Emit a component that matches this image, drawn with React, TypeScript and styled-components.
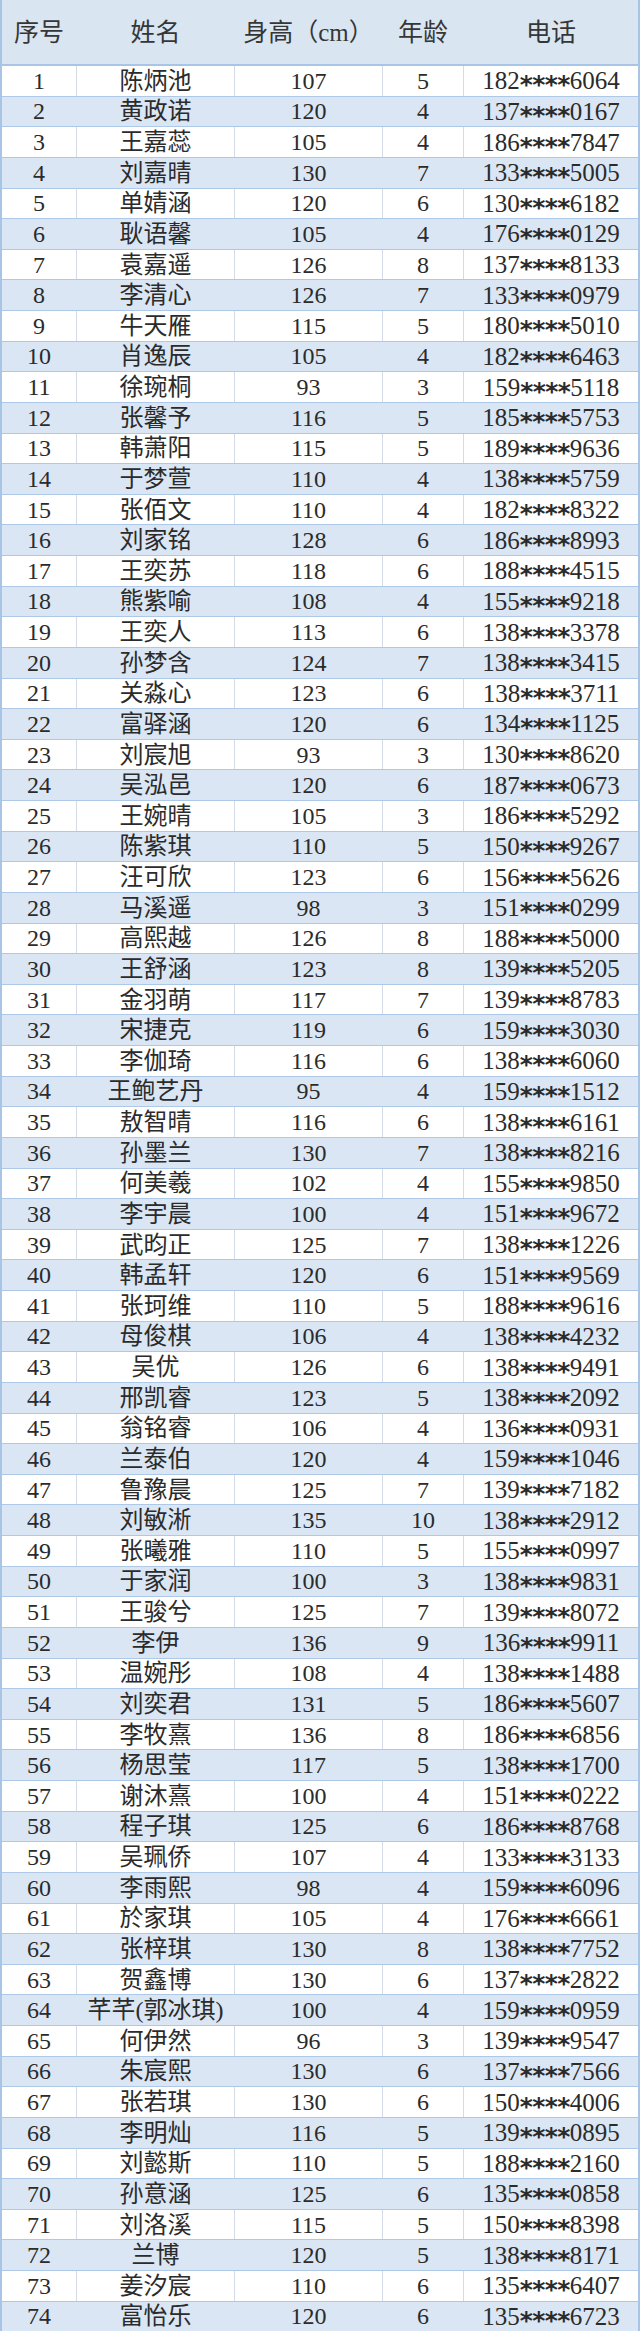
import React from 'react'
import styled, { createGlobalStyle, css } from 'styled-components'

type Student = [string, number, number, string]

const students: Student[] = [
  ['陈炳池', 107, 5, '182****6064'],
  ['黄政诺', 120, 4, '137****0167'],
  ['王嘉蕊', 105, 4, '186****7847'],
  ['刘嘉晴', 130, 7, '133****5005'],
  ['单婧涵', 120, 6, '130****6182'],
  ['耿语馨', 105, 4, '176****0129'],
  ['袁嘉遥', 126, 8, '137****8133'],
  ['李清心', 126, 7, '133****0979'],
  ['牛天雁', 115, 5, '180****5010'],
  ['肖逸辰', 105, 4, '182****6463'],
  ['徐琬桐', 93, 3, '159****5118'],
  ['张馨予', 116, 5, '185****5753'],
  ['韩萧阳', 115, 5, '189****9636'],
  ['于梦萱', 110, 4, '138****5759'],
  ['张佰文', 110, 4, '182****8322'],
  ['刘家铭', 128, 6, '186****8993'],
  ['王奕苏', 118, 6, '188****4515'],
  ['熊紫喻', 108, 4, '155****9218'],
  ['王奕人', 113, 6, '138****3378'],
  ['孙梦含', 124, 7, '138****3415'],
  ['关淼心', 123, 6, '138****3711'],
  ['富驿涵', 120, 6, '134****1125'],
  ['刘宸旭', 93, 3, '130****8620'],
  ['吴泓邑', 120, 6, '187****0673'],
  ['王婉晴', 105, 3, '186****5292'],
  ['陈紫琪', 110, 5, '150****9267'],
  ['汪可欣', 123, 6, '156****5626'],
  ['马溪遥', 98, 3, '151****0299'],
  ['高熙越', 126, 8, '188****5000'],
  ['王舒涵', 123, 8, '139****5205'],
  ['金羽萌', 117, 7, '139****8783'],
  ['宋捷克', 119, 6, '159****3030'],
  ['李伽琦', 116, 6, '138****6060'],
  ['王鲍艺丹', 95, 4, '159****1512'],
  ['敖智晴', 116, 6, '138****6161'],
  ['孙墨兰', 130, 7, '138****8216'],
  ['何美羲', 102, 4, '155****9850'],
  ['李宇晨', 100, 4, '151****9672'],
  ['武昀正', 125, 7, '138****1226'],
  ['韩孟轩', 120, 6, '151****9569'],
  ['张珂维', 110, 5, '188****9616'],
  ['母俊棋', 106, 4, '138****4232'],
  ['吴优', 126, 6, '138****9491'],
  ['邢凯睿', 123, 5, '138****2092'],
  ['翁铭睿', 106, 4, '136****0931'],
  ['兰泰伯', 120, 4, '159****1046'],
  ['鲁豫晨', 125, 7, '139****7182'],
  ['刘敏淅', 135, 10, '138****2912'],
  ['张曦雅', 110, 5, '155****0997'],
  ['于家润', 100, 3, '138****9831'],
  ['王骏兮', 125, 7, '139****8072'],
  ['李伊', 136, 9, '136****9911'],
  ['温婉彤', 108, 4, '138****1488'],
  ['刘奕君', 131, 5, '186****5607'],
  ['李牧熹', 136, 8, '186****6856'],
  ['杨思莹', 117, 5, '138****1700'],
  ['谢沐熹', 100, 4, '151****0222'],
  ['程子琪', 125, 6, '186****8768'],
  ['吴珮侨', 107, 4, '133****3133'],
  ['李雨熙', 98, 4, '159****6096'],
  ['於家琪', 105, 4, '176****6661'],
  ['张梓琪', 130, 8, '138****7752'],
  ['贺鑫博', 130, 6, '137****2822'],
  ['芊芊(郭冰琪)', 100, 4, '159****0959'],
  ['何伊然', 96, 3, '139****9547'],
  ['朱宸熙', 130, 6, '137****7566'],
  ['张若琪', 130, 6, '150****4006'],
  ['李明灿', 116, 5, '139****0895'],
  ['刘懿斯', 110, 5, '188****2160'],
  ['孙意涵', 125, 6, '135****0858'],
  ['刘洛溪', 115, 5, '150****8398'],
  ['兰博', 120, 5, '138****8171'],
  ['姜汐宸', 110, 6, '135****6407'],
  ['富怡乐', 120, 6, '135****6723'],
]

const GlobalStyle = createGlobalStyle`
  body {
    margin: 0;
    background: #ffffff;
    font-family: "Liberation Serif", "Noto Sans CJK SC", serif;
    color: #2b2b2b;
  }
`

const columns = css`
  display: grid;
  grid-template-columns: 75px 158px 148px 81px 1fr;
`

const Table = styled.div`
  display: flex;
  flex-direction: column;
  width: 640px;
  height: 2331px;
  border-left: 2px solid #a9c5e6;
  border-right: 2px solid #a9c5e6;
  box-sizing: border-box;
`

const HeaderRow = styled.div`
  ${columns}
  flex: 0 0 66px;
  background: #dae5f2;
  border-bottom: 2px solid #a9c5e6;
  box-sizing: border-box;
`

const Row = styled.div<{ $striped: boolean }>`
  ${columns}
  flex: 1 1 0;
  min-height: 0;
  background: ${({ $striped }) => ($striped ? '#dae6f4' : '#ffffff')};
  border-bottom: 1px solid #aec8e8;
  box-sizing: border-box;

  &:last-child {
    border-bottom: none;
  }
`

const Cell = styled.div<{ $divided?: boolean }>`
  display: flex;
  align-items: center;
  justify-content: center;
  font-size: 24px;
  line-height: 1;
  white-space: nowrap;
  color: #2b2b2b;
  border-right: 1px solid ${({ $divided }) => ($divided ? '#d3dbe6' : 'transparent')};

  &:last-child {
    border-right: none;
  }
`

const PhoneCell = styled(Cell)`
  font-size: 25px;
`

const Mask = styled.span`
  display: inline-block;
  font-family: "DejaVu Sans", sans-serif;
  font-weight: bold;
  font-size: 25px;
  width: 12.5px;
  text-align: center;
  transform: translateY(4px);
`

const HeaderCell = styled(Cell)`
  font-size: 25px;
  color: #363636;
`

const Phone = ({ value }: { value: string }) => {
  const [head, tail] = value.split('****')
  return (
    <>
      {head}
      {[0, 1, 2, 3].map((k) => (
        <Mask key={k}>*</Mask>
      ))}
      {tail}
    </>
  )
}

export default function App() {
  return (
    <>
      <GlobalStyle />
      <Table>
        <HeaderRow>
          <HeaderCell>序号</HeaderCell>
          <HeaderCell>姓名</HeaderCell>
          <HeaderCell>身高（cm）</HeaderCell>
          <HeaderCell>年龄</HeaderCell>
          <HeaderCell>电话</HeaderCell>
        </HeaderRow>
        {students.map(([name, height, age, phone], i) => {
          const striped = i % 2 === 1
          return (
            <Row key={i} $striped={striped}>
              <Cell $divided={!striped}>{i + 1}</Cell>
              <Cell $divided={!striped}>{name}</Cell>
              <Cell $divided={!striped}>{height}</Cell>
              <Cell $divided={!striped}>{age}</Cell>
              <PhoneCell>
                <Phone value={phone} />
              </PhoneCell>
            </Row>
          )
        })}
      </Table>
    </>
  )
}
